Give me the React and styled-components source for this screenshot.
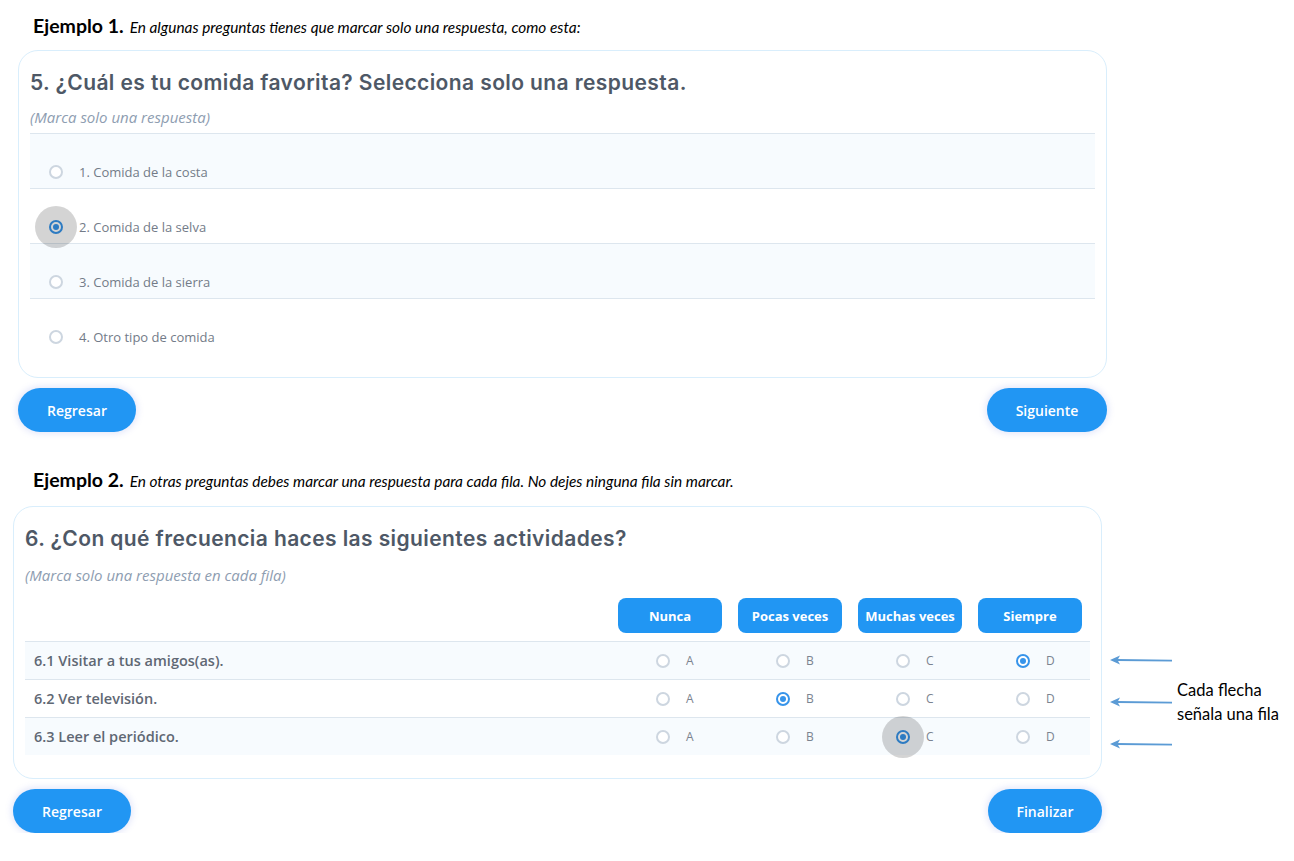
import React from "react";
import styled, { createGlobalStyle } from "styled-components";

const GlobalStyle = createGlobalStyle`
  body {
    margin: 0;
    background: #fff;
    font-family: "Open Sans", "Noto Sans", sans-serif;
  }
`;

const Page = styled.div`
  width: 1294px;
  padding-top: 15px;
`;

const Section = styled.section`
  margin-left: ${(props) => props.offset}px;
  margin-bottom: ${(props) => props.spaceBelow || 0}px;
`;

const ExampleHeading = styled.div`
  font-family: "Lato", "Open Sans", sans-serif;
  margin-left: ${(props) => props.indent}px;
  margin-bottom: ${(props) => props.spaceBelow}px;
  line-height: 22px;
  color: #000;

  b {
    font-size: 19.5px;
    font-weight: 700;
  }

  i {
    font-size: 15.4px;
    margin-left: 6px;
  }
`;

const Card = styled.div`
  width: 1089px;
  flex: none;
  box-sizing: border-box;
  border: 1px solid #d9eefc;
  border-radius: 20px;
  padding: 18px 11px 23px;
  background: #fff;
`;

const Title = styled.h2`
  margin: 0;
  font-family: "Inter", "Noto Sans", sans-serif;
  font-weight: 600;
  font-size: 21px;
  line-height: 28px;
  color: #4e5866;
  letter-spacing: 0.4px;
`;

const Hint = styled.div`
  font-style: italic;
  font-size: 15px;
  color: #8e9db1;
  line-height: 20px;
  margin-top: ${(props) => props.spaceAbove}px;
`;

const OptionList = styled.div`
  margin-top: 6px;
  border-top: 1px solid #dde6ee;
`;

const OptionRow = styled.label`
  display: flex;
  align-items: center;
  gap: 16px;
  height: 54px;
  padding-left: 19px;
  border-bottom: ${(props) => (props.last ? "1px solid transparent" : "1px solid #dde6ee")};
  background: ${(props) => (props.shaded ? "#f7fbfe" : "#fff")};
  font-size: 13px;
  color: #737b88;

  & > * {
    margin-top: 21px;
  }
`;

const OptionText = styled.span``;

const Radio = styled.span`
  position: relative;
  flex: none;
  width: 14px;
  height: 14px;
  box-sizing: border-box;
  border-radius: 50%;
  border: 2px solid ${(props) => (props.checked ? "#3794ea" : "#cdd6e0")};
  background: #fff;

  &::before {
    content: "";
    display: ${(props) => (props.checked ? "block" : "none")};
    position: absolute;
    inset: 2px;
    border-radius: 50%;
    background: #3794ea;
  }

  &::after {
    content: "";
    display: ${(props) => (props.focused ? "block" : "none")};
    position: absolute;
    left: 50%;
    top: 50%;
    width: 42px;
    height: 42px;
    margin: -21px 0 0 -21px;
    border-radius: 50%;
    background: rgba(0, 0, 0, 0.17);
  }
`;

const Actions = styled.div`
  width: 1089px;
  display: flex;
  justify-content: space-between;
  margin-top: 10px;
`;

const PillButton = styled.button`
  height: 44px;
  width: ${(props) => props.w}px;
  border: none;
  border-radius: 22px;
  background: #2196f3;
  color: #fff;
  font-family: "Open Sans", sans-serif;
  font-size: 14px;
  font-weight: 600;
  box-shadow: 0 0 6px 2px rgba(110, 130, 230, 0.18);
  cursor: pointer;
`;

const MatrixWrap = styled.div`
  display: flex;
  align-items: flex-start;
`;

const Matrix = styled.div`
  margin-top: 13px;
`;

const GridRow = styled.div`
  display: grid;
  grid-template-columns: 1fr repeat(4, 104px);
  column-gap: 16px;
  align-items: center;
  padding-right: 8px;
`;

const HeadRow = styled(GridRow)`
  padding-bottom: 8px;
`;

const ColumnHead = styled.div`
  height: 35px;
  display: flex;
  align-items: center;
  justify-content: center;
  border-radius: 8px;
  background: #2196f3;
  color: #fff;
  font-size: 13px;
  font-weight: 700;
`;

const MatrixRow = styled(GridRow)`
  height: 37px;
  border-top: 1px solid #dde6ee;
  background: ${(props) => (props.shaded ? "#f7fbfe" : "#fff")};
`;

const RowLabel = styled.div`
  padding-left: 9px;
  font-size: 14.5px;
  font-weight: 600;
  color: #5f6874;
`;

const Cell = styled.label`
  display: flex;
  align-items: center;
  gap: 16px;
  padding-left: 38px;
  font-size: 12px;
  color: #7b8390;
`;

const Aside = styled.div`
  display: flex;
  align-items: center;
  margin-left: 7px;
  margin-top: 148px;
`;

const Arrows = styled.div`
  display: flex;
  flex-direction: column;
  gap: 30px;

  svg {
    display: block;
  }
`;

const Note = styled.div`
  font-family: "Lato", "Open Sans", sans-serif;
  font-size: 16.5px;
  line-height: 24px;
  color: #000;
  margin-left: 4px;
`;

const Arrow = () => (
  <svg width="64" height="12" viewBox="0 0 64 12">
    <line x1="8" y1="6" x2="63" y2="6.6" stroke="#5b9bd5" strokeWidth="1.8" />
    <path d="M1 6 L11 1.5 L8.5 6 L11 10.5 Z" fill="#5b9bd5" />
  </svg>
);

const foods = [
  "1. Comida de la costa",
  "2. Comida de la selva",
  "3. Comida de la sierra",
  "4. Otro tipo de comida",
];

const columns = ["Nunca", "Pocas veces", "Muchas veces", "Siempre"];
const letters = ["A", "B", "C", "D"];

const activities = [
  { label: "6.1 Visitar a tus amigos(as).", pick: 3 },
  { label: "6.2 Ver televisión.", pick: 1 },
  { label: "6.3 Leer el periódico.", pick: 2, focused: true },
];

export default function App() {
  return (
    <Page>
      <GlobalStyle />

      <Section offset={18} spaceBelow={37}>
        <ExampleHeading indent={15} spaceBelow={12}>
          <b>Ejemplo 1.</b>
          <i>En algunas preguntas tienes que marcar solo una respuesta, como esta:</i>
        </ExampleHeading>
        <Card>
          <Title>5. ¿Cuál es tu comida favorita? Selecciona solo una respuesta.</Title>
          <Hint spaceAbove={10}>(Marca solo una respuesta)</Hint>
          <OptionList>
            {foods.map((food, i) => (
              <OptionRow key={food} shaded={i % 2 === 0} last={i === foods.length - 1}>
                <Radio checked={i === 1} focused={i === 1} />
                <OptionText>{food}</OptionText>
              </OptionRow>
            ))}
          </OptionList>
        </Card>
        <Actions>
          <PillButton w={118}>Regresar</PillButton>
          <PillButton w={120}>Siguiente</PillButton>
        </Actions>
      </Section>

      <Section offset={13}>
        <ExampleHeading indent={20} spaceBelow={14}>
          <b>Ejemplo 2.</b>
          <i>En otras preguntas debes marcar una respuesta para cada fila. No dejes ninguna fila sin marcar.</i>
        </ExampleHeading>
        <MatrixWrap>
          <Card>
            <Title>6. ¿Con qué frecuencia haces las siguientes actividades?</Title>
            <Hint spaceAbove={12}>(Marca solo una respuesta en cada fila)</Hint>
            <Matrix>
              <HeadRow>
                <div />
                {columns.map((c) => (
                  <ColumnHead key={c}>{c}</ColumnHead>
                ))}
              </HeadRow>
              {activities.map((row, r) => (
                <MatrixRow key={row.label} shaded={r % 2 === 0}>
                  <RowLabel>{row.label}</RowLabel>
                  {letters.map((l, i) => (
                    <Cell key={l}>
                      <Radio checked={row.pick === i} focused={row.focused && row.pick === i} />
                      {l}
                    </Cell>
                  ))}
                </MatrixRow>
              ))}
            </Matrix>
          </Card>
          <Aside>
            <Arrows>
              <Arrow />
              <Arrow />
              <Arrow />
            </Arrows>
            <Note>
              Cada flecha
              <br />
              señala una fila
            </Note>
          </Aside>
        </MatrixWrap>
        <Actions>
          <PillButton w={118}>Regresar</PillButton>
          <PillButton w={114}>Finalizar</PillButton>
        </Actions>
      </Section>
    </Page>
  );
}
